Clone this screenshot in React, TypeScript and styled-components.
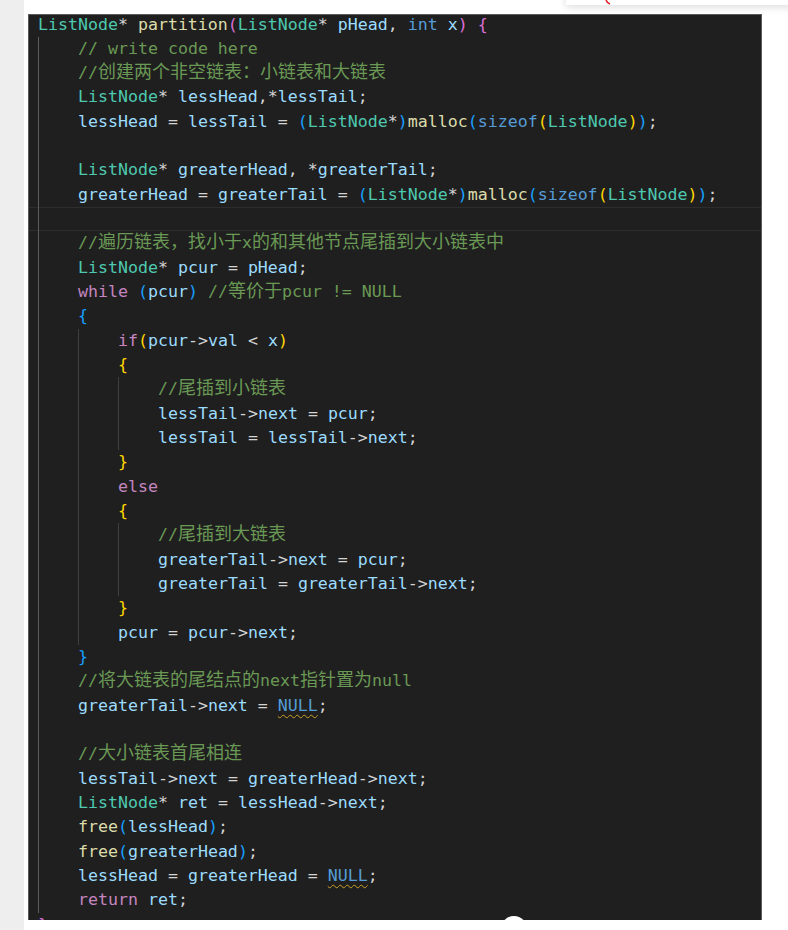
import React from "react";
import styled, { createGlobalStyle } from "styled-components";

const GlobalStyle = createGlobalStyle`
  html, body { margin: 0; padding: 0; background: #ffffff; }
  #root { width: 788px; height: 930px; }
`;

const LH = 24.33;

const Page = styled.div`
  position: relative;
  display: flex;
  width: 788px;
  height: 930px;
  overflow: hidden;
  background: #ffffff;
`;

const SideStrip = styled.div`
  flex: none;
  width: 24px;
  height: 100%;
  background: #eeeeee;
`;

const Main = styled.div`
  flex: 1;
  display: flex;
  flex-direction: column;
  padding: 14px 0 0 4px;
`;

const Editor = styled.div`
  width: 734px;
  height: 906px;
  box-sizing: border-box;
  background: #1f1f1f;
  border: 1px solid #5a5a5a;
  border-bottom: none;
  overflow: hidden;
`;

const CodeBlock = styled.div`
  margin-top: -2.5px;
  font-family: "DejaVu Sans Mono", "Liberation Mono", monospace;
  font-size: 16.6px;
  color: #d4d4d4;
`;

const Line = styled.div<{ $current?: boolean }>`
  display: flex;
  align-items: stretch;
  height: ${LH}px;
  padding-left: 9px;
  box-shadow: ${(p) =>
    p.$current ? "inset 0 1px 0 #2d2d2d, inset 0 -1px 0 #2d2d2d" : "none"};
`;

const Guide = styled.span<{ $active?: boolean }>`
  flex: none;
  width: 40px;
  box-sizing: border-box;
  border-left: 1px solid ${(p) => (p.$active ? "#5c5c5c" : "#404040")};
`;

const Code = styled.span`
  white-space: pre;
  line-height: ${LH}px;
`;

const COLORS: Record<string, string> = {
  type: "#4ec9b0",
  fn: "#dcdcaa",
  var: "#9cdcfe",
  kw: "#569cd6",
  ctrl: "#c586c0",
  com: "#6a9955",
  op: "#d4d4d4",
  b1: "#da70d6",
  b2: "#179fff",
  b3: "#ffd700",
  warn: "#569cd6",
};

const Tok = styled.span<{ $k: string }>`
  color: ${(p) => COLORS[p.$k] || "#d4d4d4"};
  ${(p) =>
    p.$k === "warn"
      ? `text-decoration-line: underline;
         text-decoration-style: wavy;
         text-decoration-color: #c9a126;
         text-decoration-thickness: 1px;
         text-underline-offset: 3px;`
      : ""}
`;

const Cjk = styled.span`
  font-family: "Noto Sans CJK SC", sans-serif;
  font-size: 18px;
  line-height: 1;
`;

const TopPopup = styled.div`
  position: absolute;
  top: -30px;
  left: 566px;
  width: 260px;
  height: 35px;
  background: #ffffff;
  box-shadow: 0 2px 8px rgba(0, 0, 0, 0.14);
`;

const RedMark = styled.svg`
  position: absolute;
  top: 0;
  left: 604px;
`;

const Knob = styled.div`
  position: absolute;
  left: 501px;
  top: 916px;
  width: 26px;
  height: 26px;
  border-radius: 50%;
  background: #ffffff;
`;

type T = [string, string];
type L = { indent: number; toks: T[]; current?: boolean };

const CJK_RE = /([\u3000-\u303f\u3400-\u9fff\uff00-\uffef]+)/;

function renderText(text: string) {
  const parts = text.split(CJK_RE);
  return parts.map((p, i) =>
    i % 2 === 1 ? <Cjk key={i}>{p}</Cjk> : <React.Fragment key={i}>{p}</React.Fragment>
  );
}

const malloc = (a: string, b: string): T[] => [
  ["var", a],
  ["op", " = "],
  ["var", b],
  ["op", " = "],
  ["b2", "("],
  ["type", "ListNode"],
  ["op", "*"],
  ["b2", ")"],
  ["fn", "malloc"],
  ["b2", "("],
  ["kw", "sizeof"],
  ["b3", "("],
  ["type", "ListNode"],
  ["b3", ")"],
  ["b2", ")"],
  ["op", ";"],
];

const LINES: L[] = [
  {
    indent: 0,
    toks: [
      ["type", "ListNode"],
      ["op", "* "],
      ["fn", "partition"],
      ["b1", "("],
      ["type", "ListNode"],
      ["op", "* "],
      ["var", "pHead"],
      ["op", ", "],
      ["kw", "int"],
      ["op", " "],
      ["var", "x"],
      ["b1", ")"],
      ["op", " "],
      ["b1", "{"],
    ],
  },
  { indent: 1, toks: [["com", "// write code here"]] },
  { indent: 1, toks: [["com", "//创建两个非空链表：小链表和大链表"]] },
  {
    indent: 1,
    toks: [
      ["type", "ListNode"],
      ["op", "* "],
      ["var", "lessHead"],
      ["op", ",*"],
      ["var", "lessTail"],
      ["op", ";"],
    ],
  },
  { indent: 1, toks: malloc("lessHead", "lessTail") },
  { indent: 1, toks: [] },
  {
    indent: 1,
    toks: [
      ["type", "ListNode"],
      ["op", "* "],
      ["var", "greaterHead"],
      ["op", ", *"],
      ["var", "greaterTail"],
      ["op", ";"],
    ],
  },
  { indent: 1, toks: malloc("greaterHead", "greaterTail") },
  { indent: 1, toks: [], current: true },
  { indent: 1, toks: [["com", "//遍历链表，找小于x的和其他节点尾插到大小链表中"]] },
  {
    indent: 1,
    toks: [
      ["type", "ListNode"],
      ["op", "* "],
      ["var", "pcur"],
      ["op", " = "],
      ["var", "pHead"],
      ["op", ";"],
    ],
  },
  {
    indent: 1,
    toks: [
      ["ctrl", "while"],
      ["op", " "],
      ["b2", "("],
      ["var", "pcur"],
      ["b2", ")"],
      ["op", " "],
      ["com", "//等价于pcur != NULL"],
    ],
  },
  { indent: 1, toks: [["b2", "{"]] },
  {
    indent: 2,
    toks: [
      ["ctrl", "if"],
      ["b3", "("],
      ["var", "pcur"],
      ["op", "->"],
      ["var", "val"],
      ["op", " < "],
      ["var", "x"],
      ["b3", ")"],
    ],
  },
  { indent: 2, toks: [["b3", "{"]] },
  { indent: 3, toks: [["com", "//尾插到小链表"]] },
  {
    indent: 3,
    toks: [
      ["var", "lessTail"],
      ["op", "->"],
      ["var", "next"],
      ["op", " = "],
      ["var", "pcur"],
      ["op", ";"],
    ],
  },
  {
    indent: 3,
    toks: [
      ["var", "lessTail"],
      ["op", " = "],
      ["var", "lessTail"],
      ["op", "->"],
      ["var", "next"],
      ["op", ";"],
    ],
  },
  { indent: 2, toks: [["b3", "}"]] },
  { indent: 2, toks: [["ctrl", "else"]] },
  { indent: 2, toks: [["b3", "{"]] },
  { indent: 3, toks: [["com", "//尾插到大链表"]] },
  {
    indent: 3,
    toks: [
      ["var", "greaterTail"],
      ["op", "->"],
      ["var", "next"],
      ["op", " = "],
      ["var", "pcur"],
      ["op", ";"],
    ],
  },
  {
    indent: 3,
    toks: [
      ["var", "greaterTail"],
      ["op", " = "],
      ["var", "greaterTail"],
      ["op", "->"],
      ["var", "next"],
      ["op", ";"],
    ],
  },
  { indent: 2, toks: [["b3", "}"]] },
  {
    indent: 2,
    toks: [
      ["var", "pcur"],
      ["op", " = "],
      ["var", "pcur"],
      ["op", "->"],
      ["var", "next"],
      ["op", ";"],
    ],
  },
  { indent: 1, toks: [["b2", "}"]] },
  { indent: 1, toks: [["com", "//将大链表的尾结点的next指针置为null"]] },
  {
    indent: 1,
    toks: [
      ["var", "greaterTail"],
      ["op", "->"],
      ["var", "next"],
      ["op", " = "],
      ["warn", "NULL"],
      ["op", ";"],
    ],
  },
  { indent: 1, toks: [] },
  { indent: 1, toks: [["com", "//大小链表首尾相连"]] },
  {
    indent: 1,
    toks: [
      ["var", "lessTail"],
      ["op", "->"],
      ["var", "next"],
      ["op", " = "],
      ["var", "greaterHead"],
      ["op", "->"],
      ["var", "next"],
      ["op", ";"],
    ],
  },
  {
    indent: 1,
    toks: [
      ["type", "ListNode"],
      ["op", "* "],
      ["var", "ret"],
      ["op", " = "],
      ["var", "lessHead"],
      ["op", "->"],
      ["var", "next"],
      ["op", ";"],
    ],
  },
  {
    indent: 1,
    toks: [
      ["fn", "free"],
      ["b2", "("],
      ["var", "lessHead"],
      ["b2", ")"],
      ["op", ";"],
    ],
  },
  {
    indent: 1,
    toks: [
      ["fn", "free"],
      ["b2", "("],
      ["var", "greaterHead"],
      ["b2", ")"],
      ["op", ";"],
    ],
  },
  {
    indent: 1,
    toks: [
      ["var", "lessHead"],
      ["op", " = "],
      ["var", "greaterHead"],
      ["op", " = "],
      ["warn", "NULL"],
      ["op", ";"],
    ],
  },
  {
    indent: 1,
    toks: [
      ["ctrl", "return"],
      ["op", " "],
      ["var", "ret"],
      ["op", ";"],
    ],
  },
  { indent: 0, toks: [["b1", "}"]] },
];

export default function App() {
  return (
    <>
      <GlobalStyle />
      <Page>
        <SideStrip />
        <Main>
          <Editor>
            <CodeBlock>
              {LINES.map((line, i) => (
                <Line key={i} $current={line.current}>
                  {Array.from({ length: line.indent }).map((_, g) => (
                    <Guide key={g} $active={g === 0} />
                  ))}
                  <Code>
                    {line.toks.map(([k, t], j) => (
                      <Tok key={j} $k={k}>
                        {renderText(t)}
                      </Tok>
                    ))}
                  </Code>
                </Line>
              ))}
            </CodeBlock>
          </Editor>
        </Main>
        <TopPopup />
        <RedMark width="10" height="6" viewBox="0 0 10 6">
          <path d="M2 0 Q3 3 6 4" stroke="#e0202a" strokeWidth="1.6" fill="none" />
        </RedMark>
        <Knob />
      </Page>
    </>
  );
}
